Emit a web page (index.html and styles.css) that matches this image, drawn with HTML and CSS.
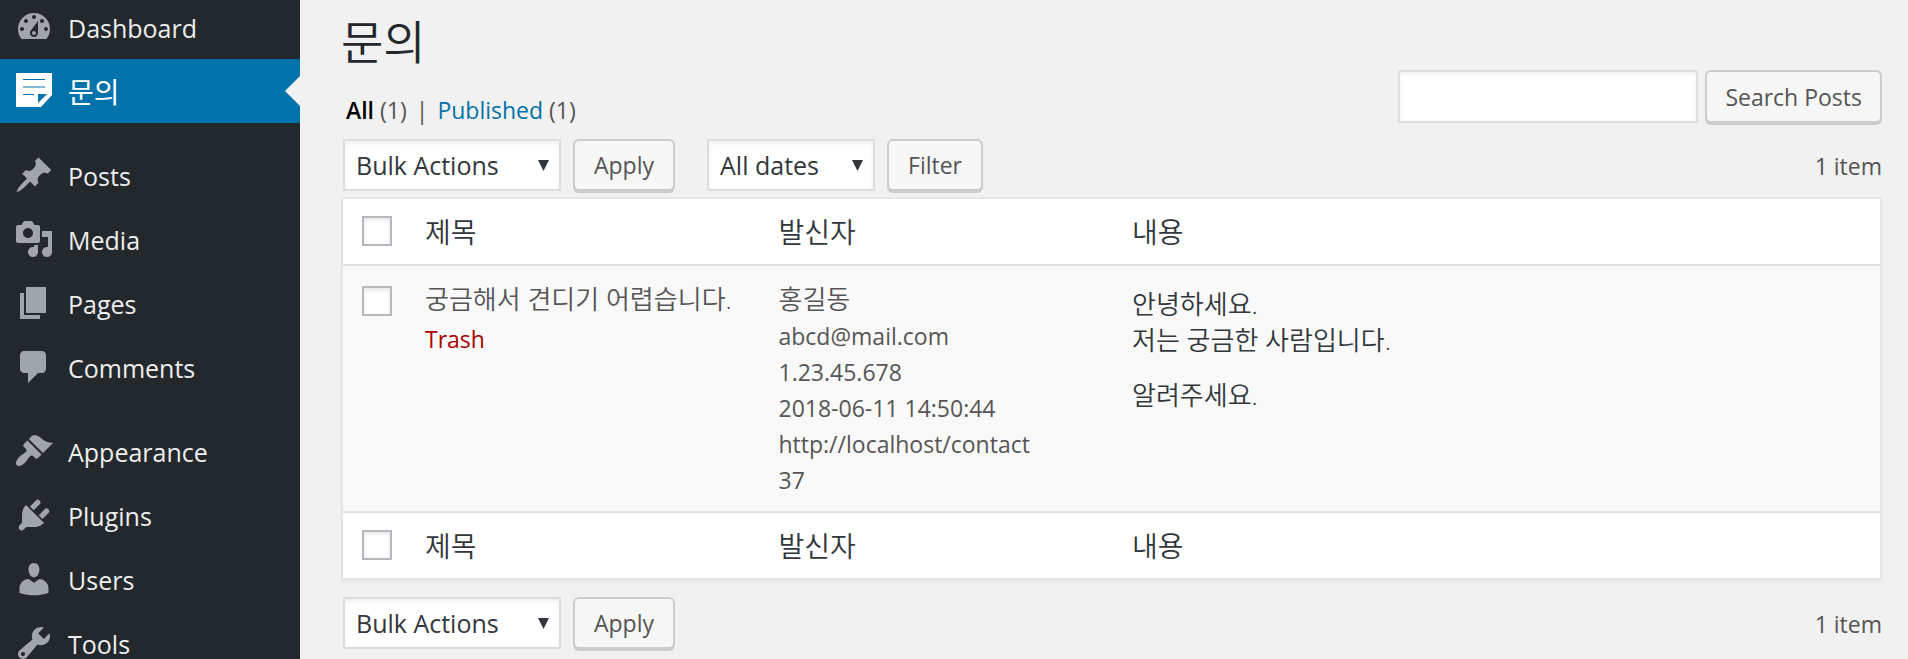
FILE: index.html
```html
<!DOCTYPE html>
<html lang="ko">
<head>
<meta charset="utf-8">
<title>문의</title>
<link rel="stylesheet" href="styles.css">
</head>
<body>
<nav class="sidebar" aria-label="Main menu">
  <ul class="menu">
    <li><a class="menu-link" href="#"><svg class="icon" viewBox="0 0 20 20"><path d="M3.76 16h12.48c1.1-1.37 1.76-3.11 1.76-5 0-4.42-3.58-8-8-8s-8 3.58-8 8c0 1.89.66 3.63 1.76 5zM10 4c.55 0 1 .45 1 1s-.45 1-1 1-1-.45-1-1 .45-1 1-1zM6 6c.55 0 1 .45 1 1s-.45 1-1 1-1-.45-1-1 .45-1 1-1zm8 0c.55 0 1 .45 1 1s-.45 1-1 1-1-.45-1-1 .45-1 1-1zm-5.37 5.55L12 7v6c0 1.1-.9 2-2 2s-2-.9-2-2c0-.57.24-1.08.63-1.45zM4 10c.55 0 1 .45 1 1s-.45 1-1 1-1-.45-1-1 .45-1 1-1zm12 0c.55 0 1 .45 1 1s-.45 1-1 1-1-.45-1-1 .45-1 1-1zm-5 3c0-.55-.45-1-1-1s-1 .45-1 1 .45 1 1 1 1-.45 1-1z"/></svg><span>Dashboard</span></a></li>
    <li><a class="menu-link current" href="#" aria-current="page"><svg class="icon" viewBox="0 0 40 40"><path d="M2 2h36v22L27 36H2zM9 8v1h22V8zM9 15.500v1h22v-1zM9 23v1h11v-1zM24 23v9l9-9z"/></svg><span class="ko">문의</span></a></li>
    <li class="group"><a class="menu-link" href="#"><svg class="icon" viewBox="0 0 20 20"><path d="M10.440 3.020l1.820-1.820 6.360 6.350-1.830 1.820c-1.050-.68-2.480-.57-3.410.36l-.75.75c-.92.93-1.040 2.350-.35 3.410l-1.830 1.820-2.410-2.410-2.800 2.790c-.42.42-3.380 2.710-3.800 2.290s1.860-3.390 2.280-3.810l2.790-2.790L4.100 9.360l1.830-1.820c1.050.69 2.480.57 3.400-.36l.75-.75c.93-.92 1.050-2.350.36-3.410z"/></svg><span>Posts</span></a></li>
    <li><a class="menu-link" href="#"><svg class="icon" viewBox="0 0 20 20"><path d="M13 11V4c0-.55-.45-1-1-1h-1.670L9 1H5L3.670 3H2c-.55 0-1 .45-1 1v7c0 .55.45 1 1 1h10c.55 0 1-.45 1-1zM7 4.500c1.380 0 2.500 1.120 2.500 2.500S8.380 9.500 7 9.500 4.500 8.380 4.500 7 5.620 4.500 7 4.500zM14 6h5v10.500c0 1.380-1.120 2.500-2.500 2.500S14 17.880 14 16.500s1.120-2.500 2.500-2.500c.17 0 .34.02.5.05V9h-3V6zm-4 8.050V13h2v3.500c0 1.380-1.120 2.500-2.500 2.500S7 17.880 7 16.500 8.120 14 9.500 14c.17 0 .34.02.5.05z"/></svg><span>Media</span></a></li>
    <li><a class="menu-link" href="#"><svg class="icon" viewBox="0 0 20 20"><path d="M6 15V2h10v13H6zm-1 1h8v2H3V5h2v11z"/></svg><span>Pages</span></a></li>
    <li><a class="menu-link" href="#"><svg class="icon" viewBox="0 0 20 20"><path d="M5 2h9c1.100 0 2 .9 2 2v7c0 1.100-.9 2-2 2h-2l-5 5v-5H5c-1.100 0-2-.9-2-2V4c0-1.100.9-2 2-2z"/></svg><span>Comments</span></a></li>
    <li class="group"><a class="menu-link" href="#"><svg class="icon" viewBox="0 0 20 20"><path d="M14.480 11.060L7.410 3.990l1.500-1.500c.5-.56 2.300-.47 3.510.32 1.210.8 1.430 1.280 2.910 2.100 1.180.64 2.450 1.260 4.450.85zm-.71.71L6.700 4.700 4.930 6.470c-.39.39-.39 1.020 0 1.410l1.060 1.060c.39.39.39 1.030 0 1.420-.6.6-1.430 1.110-2.210 1.690-.35.26-.7.53-1.010.84C1.430 14.230.4 16.080 1.400 17.070c.99 1 2.840-.03 4.180-1.360.31-.31.58-.66.85-1.020.57-.78 1.080-1.610 1.690-2.210.39-.39 1.020-.39 1.410 0l1.060 1.060c.39.39 1.020.39 1.410 0z"/></svg><span>Appearance</span></a></li>
    <li><a class="menu-link" href="#"><svg class="icon" viewBox="0 0 20 20"><path d="M13.110 4.360L9.870 7.600 8 5.730l3.240-3.240c.35-.34 1.050-.2 1.560.32.52.51.66 1.210.31 1.550zm-8 1.770l.91-1.120 9.010 9.010-1.190.84c-.71.71-2.630 1.160-3.820 1.160H6.140L4.900 17.260c-.59.59-1.540.59-2.120 0-.59-.58-.59-1.530 0-2.120l1.240-1.240v-3.880c0-1.130.4-3.190 1.090-3.890zm7.260 3.970l3.240-3.240c.34-.35 1.040-.21 1.550.31.52.51.66 1.210.31 1.550l-3.240 3.250z"/></svg><span>Plugins</span></a></li>
    <li><a class="menu-link" href="#"><svg class="icon" viewBox="0 0 20 20"><path d="M10 9.250c-2.270 0-2.730-3.440-2.730-3.440C7 4.020 7.820 2 9.970 2c2.160 0 2.980 2.020 2.710 3.810 0 0-.41 3.440-2.680 3.440zm0 2.570L12.720 10c2.390 0 4.520 2.330 4.520 4.530v2.490s-3.650 1.130-7.240 1.130c-3.650 0-7.240-1.130-7.240-1.130v-2.490c0-2.250 1.940-4.480 4.470-4.480z"/></svg><span>Users</span></a></li>
    <li><a class="menu-link" href="#"><svg class="icon" viewBox="0 0 20 20"><path d="M16.680 9.770c-1.340 1.340-3.300 1.670-4.950.99l-5.410 6.520c-.99.99-2.590.99-3.580 0s-.99-2.590 0-3.570l6.520-5.420c-.68-1.650-.35-3.610.99-4.950 1.280-1.280 3.120-1.620 4.720-1.060l-2.890 2.890 2.820 2.820 2.860-2.870c.53 1.580.18 3.390-1.080 4.650zM3.810 16.210c.4.39 1.040.39 1.430 0 .4-.4.4-1.040 0-1.430-.39-.4-1.030-.4-1.430 0-.39.39-.39 1.030 0 1.430z"/></svg><span>Tools</span></a></li>
  </ul>
</nav>

<main class="content">
  <h1 class="title">문의</h1>
  <div class="head">
    <ul class="views">
      <li><a class="view-current" href="#">All</a> (1)</li>
      <li class="bar">|</li>
      <li><a href="#">Published</a> (1)</li>
    </ul>
    <form class="search">
      <input class="field" type="search" aria-label="Search Posts">
      <button class="button" type="button">Search Posts</button>
    </form>
  </div>

  <div class="tablenav">
    <div class="actions">
      <span class="select bulk"><select aria-label="Select bulk action"><option>Bulk Actions</option></select></span>
      <button class="button" type="button">Apply</button>
    </div>
    <div class="actions">
      <span class="select dates"><select aria-label="Filter by date"><option>All dates</option></select></span>
      <button class="button" type="button">Filter</button>
    </div>
    <span class="count">1 item</span>
  </div>

  <table class="list">
    <colgroup><col class="col-check"><col class="col-text"><col class="col-text"><col></colgroup>
    <thead>
      <tr><td class="check"><input type="checkbox" aria-label="Select all"></td><th scope="col">제목</th><th scope="col">발신자</th><th scope="col">내용</th></tr>
    </thead>
    <tbody>
      <tr>
        <td class="check"><input type="checkbox" aria-label="Select 궁금해서 견디기 어렵습니다."></td>
        <td><span class="ko">궁금해서 견디기 어렵습니다.</span><div class="row-actions"><a class="trash" href="#">Trash</a></div></td>
        <td><span class="ko">홍길동</span><br>abcd@mail.com<br>1.23.45.678<br>2018-06-11 14:50:44<br>http://localhost/contact<br>37</td>
        <td class="message"><p>안녕하세요.<br>저는 궁금한 사람입니다.</p><p>알려주세요.</p></td>
      </tr>
    </tbody>
    <tfoot>
      <tr><td class="check"><input type="checkbox" aria-label="Select all"></td><th scope="col">제목</th><th scope="col">발신자</th><th scope="col">내용</th></tr>
    </tfoot>
  </table>

  <div class="tablenav bottom">
    <div class="actions">
      <span class="select bulk"><select aria-label="Select bulk action"><option>Bulk Actions</option></select></span>
      <button class="button" type="button">Apply</button>
    </div>
    <span class="count">1 item</span>
  </div>
</main>
</body>
</html>
```

FILE: styles.css
```css
* {
  box-sizing: border-box;
}

body {
  display: flex;
  height: 100vh;
  margin: 0;
  overflow: hidden;
  background: #f1f1f1;
  color: #555;
  font: 23px/36px "Open Sans", "Noto Sans CJK KR", sans-serif;
}

a {
  color: #0073aa;
  text-decoration: none;
}

ul {
  margin: 0;
  padding: 0;
  list-style: none;
}

.sidebar {
  flex: none;
  width: 300px;
  background: #23282d;
}

.menu {
  margin-top: -5px;
}

.group {
  margin-top: 20px;
}

.menu-link {
  position: relative;
  display: flex;
  align-items: center;
  gap: 14px;
  height: 64px;
  padding-left: 14px;
  color: #eee;
  font-size: 25px;
}

.menu-link span {
  padding-top: 2px;
}

.menu-link .ko {
  font-size: 28px;
}

.current {
  background: #0073aa;
  color: #fff;
}

.current::after {
  content: "";
  position: absolute;
  top: 50%;
  right: 0;
  margin-top: -15px;
  border: 15px solid transparent;
  border-left: 0;
  border-right-color: #f1f1f1;
}

.icon {
  flex: none;
  width: 40px;
  height: 40px;
  fill: #a0a5aa;
  fill-rule: evenodd;
}

.current .icon {
  fill: #fff;
}

.content {
  flex: 1;
  min-width: 0;
  padding: 12px 26px 0 41px;
}

.title {
  margin: 0;
  color: #23282d;
  font-size: 46px;
  font-weight: 350;
  line-height: 58px;
}

.head {
  display: flex;
  align-items: flex-end;
  justify-content: space-between;
}

.views {
  display: flex;
  gap: 9px;
  padding-left: 5px;
  line-height: 30px;
}

.view-current {
  color: #000;
  font-weight: 600;
}

.search {
  display: flex;
  align-items: flex-start;
  gap: 7px;
}

.field,
.select select {
  height: 53px;
  border: 2px solid #ddd;
  border-radius: 0;
  background: #fff;
  box-shadow: inset 0 2px 4px rgba(0, 0, 0, 0.07);
  color: #32373c;
  font: inherit;
  appearance: none;
}

.field {
  width: 300px;
  padding: 0 8px;
}

.button {
  height: 53px;
  margin-bottom: 2px;
  padding: 0 18px;
  border: 2px solid #ccc;
  border-radius: 6px;
  background: #f7f7f7;
  box-shadow: 0 2px 0 #ccc;
  color: #555;
  font: inherit;
}

.tablenav {
  display: flex;
  align-items: flex-start;
  gap: 32px;
  padding: 14px 0 4px 2px;
}

.tablenav .button {
  height: 52px;
  padding: 0 19px;
}

.actions {
  display: flex;
  gap: 12px;
}

.select {
  position: relative;
}

.select select {
  display: block;
  width: 100%;
  height: 52px;
  padding: 0 11px;
  font-size: 25px;
}

.select::after {
  content: "";
  position: absolute;
  top: 21px;
  right: 12px;
  width: 11px;
  height: 11px;
  background: #32373c;
  clip-path: polygon(0 0, 100% 0, 50% 100%);
  pointer-events: none;
}

.bulk {
  width: 218px;
}

.dates {
  width: 168px;
}

.count {
  margin-left: auto;
  line-height: 54px;
}

.list {
  width: 100%;
  border: 2px solid #e5e5e5;
  border-spacing: 0;
  background: #fff;
  box-shadow: 0 2px 2px rgba(0, 0, 0, 0.04);
  table-layout: fixed;
}

.col-check {
  width: 65px;
}

.col-text {
  width: 23%;
}

.list th {
  height: 65px;
  padding: 0 17px;
  color: #32373c;
  font-size: 28px;
  font-weight: 350;
  text-align: left;
}

.list td {
  padding: 15px 17px 13px;
  vertical-align: top;
}

.list .check {
  padding: 17px 0 0 19px;
}

.list tbody td {
  border-top: 2px solid #e1e1e1;
  border-bottom: 2px solid #e1e1e1;
  background: #f9f9f9;
}

.list tbody .check {
  padding-top: 20px;
}

.list .ko,
.message {
  font-size: 26px;
  font-weight: 350;
}

.list .ko {
  line-height: 36px;
}

.message p {
  margin: 0 0 19px;
  color: #32373c;
}

.list td.message {
  padding: 20px 17px 0;
}

.row-actions {
  padding-top: 3px;
}

.trash {
  color: #a00;
}

input[type="checkbox"] {
  display: block;
  width: 30px;
  height: 30px;
  margin: 0;
  border: 2px solid #b4b9be;
  background: #fff;
  box-shadow: inset 0 2px 4px rgba(0, 0, 0, 0.1);
  appearance: none;
}

.bottom {
  padding-top: 17px;
}
```
